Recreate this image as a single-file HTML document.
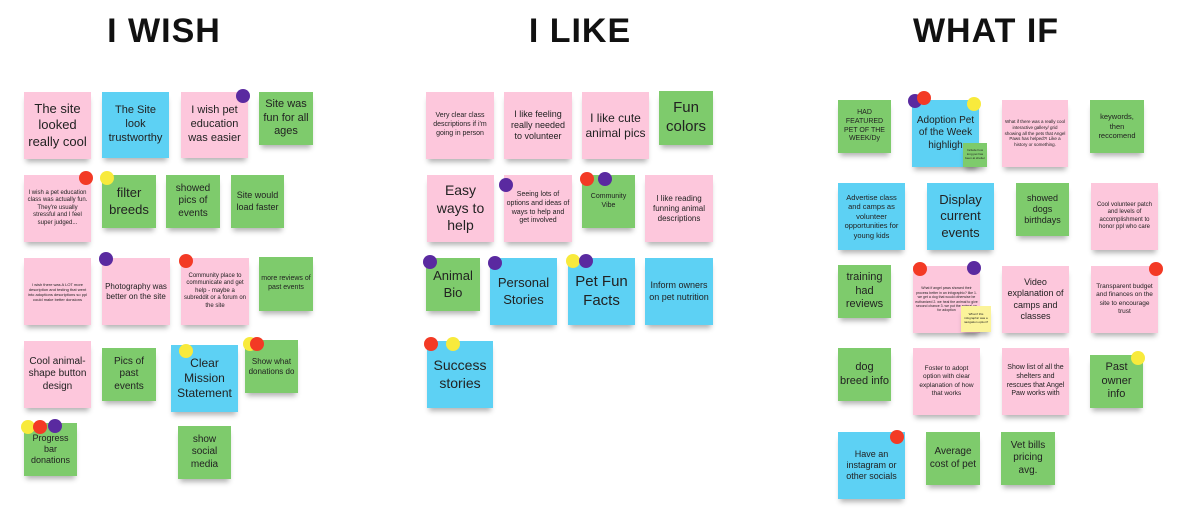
<!DOCTYPE html>
<html><head><meta charset="utf-8"><style>
body{margin:0;width:1180px;height:520px;background:#fff;position:relative;overflow:hidden;font-family:"Liberation Sans",sans-serif}
h1{position:absolute;top:12px;margin:0;font-size:34px;font-weight:bold;color:#111;letter-spacing:1px;transform:translateX(-50%);white-space:nowrap}
.n{position:absolute;display:flex;align-items:center;justify-content:center;text-align:center;color:#222;line-height:1.25;box-shadow:0 5px 5px -2px rgba(0,0,0,.3);box-sizing:border-box;padding:2px;overflow:hidden}
.p{background:#fdc7dc}.b{background:#5dd1f4}.g{background:#7ecb6c}.y{background:#fbf39a}
.d{position:absolute;width:14px;height:14px;border-radius:50%;margin:-7px 0 0 -7px}
.r{background:#f33a25}.u{background:#5a2aa0}.w{background:#f8ea3c}
</style></head><body>
<h1 style="left:164px">I WISH</h1>
<h1 style="left:580px">I LIKE</h1>
<h1 style="left:986px">WHAT IF</h1>

<div class="n p" style="left:24px;top:92px;width:67px;height:67px;font-size:13px">The site looked really cool</div>
<div class="n b" style="left:102px;top:92px;width:67px;height:66px;font-size:11px">The Site look trustworthy</div>
<div class="n p" style="left:181px;top:92px;width:67px;height:66px;font-size:11px">I wish pet education was easier</div>
<div class="n g" style="left:259px;top:92px;width:54px;height:53px;font-size:11px">Site was fun for all ages</div>
<div class="n p" style="left:24px;top:175px;width:67px;height:67px;font-size:6px">I wish a pet education class was actually fun. They're usually stressful and I feel super judged...</div>
<div class="n g" style="left:102px;top:175px;width:54px;height:53px;font-size:13px">filter breeds</div>
<div class="n g" style="left:166px;top:175px;width:54px;height:53px;font-size:10px">showed pics of events</div>
<div class="n g" style="left:231px;top:175px;width:53px;height:53px;font-size:9px">Site would load faster</div>
<div class="n p" style="left:24px;top:258px;width:67px;height:67px;font-size:4px">I wish there was A LOT more description and testing that went into adoptions descriptions so ppl could make better donsions</div>
<div class="n p" style="left:102px;top:258px;width:68px;height:67px;font-size:8px">Photography was better on the site</div>
<div class="n p" style="left:181px;top:258px;width:68px;height:67px;font-size:6px">Community place to communicate and get help - maybe a subreddit or a forum on the site</div>
<div class="n g" style="left:259px;top:257px;width:54px;height:54px;font-size:7px">more reviews of past events</div>
<div class="n p" style="left:24px;top:341px;width:67px;height:67px;font-size:10px">Cool animal-shape button design</div>
<div class="n g" style="left:102px;top:348px;width:54px;height:53px;font-size:10px">Pics of past events</div>
<div class="n b" style="left:171px;top:345px;width:67px;height:67px;font-size:12px">Clear Mission Statement</div>
<div class="n g" style="left:245px;top:340px;width:53px;height:53px;font-size:8px">Show what donations do</div>
<div class="n g" style="left:24px;top:423px;width:53px;height:53px;font-size:9px">Progress bar donations</div>
<div class="n g" style="left:178px;top:426px;width:53px;height:53px;font-size:10px">show social media</div>

<div class="n p" style="left:426px;top:92px;width:68px;height:67px;font-size:7px">Very clear class descriptions if i'm going in person</div>
<div class="n p" style="left:504px;top:92px;width:68px;height:67px;font-size:9px">I like feeling really needed to volunteer</div>
<div class="n p" style="left:582px;top:92px;width:67px;height:67px;font-size:12px">I like cute animal pics</div>
<div class="n g" style="left:659px;top:91px;width:54px;height:54px;font-size:15px">Fun colors</div>
<div class="n p" style="left:427px;top:175px;width:67px;height:67px;font-size:14px">Easy ways to help</div>
<div class="n p" style="left:504px;top:175px;width:68px;height:67px;font-size:7px">Seeing lots of options and ideas of ways to help and get involved</div>
<div class="n g" style="left:582px;top:175px;width:53px;height:53px;font-size:7px">Community Vibe</div>
<div class="n p" style="left:645px;top:175px;width:68px;height:67px;font-size:8px">I like reading funning animal descriptions</div>
<div class="n g" style="left:426px;top:258px;width:54px;height:53px;font-size:13px">Animal Bio</div>
<div class="n b" style="left:490px;top:258px;width:67px;height:67px;font-size:13px">Personal Stories</div>
<div class="n b" style="left:568px;top:258px;width:67px;height:67px;font-size:15px">Pet Fun Facts</div>
<div class="n b" style="left:645px;top:258px;width:68px;height:67px;font-size:9px">Inform owners on pet nutrition</div>
<div class="n b" style="left:427px;top:341px;width:66px;height:67px;font-size:14px">Success stories</div>

<div class="n g" style="left:838px;top:100px;width:53px;height:53px;font-size:7px">HAD FEATURED PET OF THE WEEK/Dy</div>
<div class="n b" style="left:912px;top:100px;width:67px;height:67px;font-size:10px;justify-content:flex-start">Adoption Pet of the Week highligh</div>
<div class="n g" style="left:963px;top:143px;width:24px;height:24px;font-size:3px">Include how long pet has been at shelter</div>
<div class="n p" style="left:1002px;top:100px;width:66px;height:67px;font-size:4.5px">What if there was a really cool interactive gallery/ grid showing all the pets that Angel Paws has helped?! Like a history or something.</div>
<div class="n g" style="left:1090px;top:100px;width:54px;height:53px;font-size:7.5px">keywords, then reccomend</div>
<div class="n b" style="left:838px;top:183px;width:67px;height:67px;font-size:7.5px">Advertise class and camps as volunteer opportunities for young kids</div>
<div class="n b" style="left:927px;top:183px;width:67px;height:67px;font-size:13px">Display current events</div>
<div class="n g" style="left:1016px;top:183px;width:53px;height:53px;font-size:9px">showed dogs birthdays</div>
<div class="n p" style="left:1091px;top:183px;width:67px;height:67px;font-size:6px">Cool volunteer patch and levels of accomplishment to honor ppl who care</div>
<div class="n g" style="left:838px;top:265px;width:53px;height:53px;font-size:11px">training had reviews</div>
<div class="n p" style="left:913px;top:266px;width:67px;height:67px;font-size:3.5px">What if angel paws showed their process better in an infographic? like 1. we get a dog that would otherwise be euthanized 2. we heal the animal to give second chance 3. we put the animal up for adoption</div>
<div class="n y" style="left:961px;top:306px;width:30px;height:26px;font-size:3px">What if this infographic was a navigation option?</div>
<div class="n p" style="left:1002px;top:266px;width:67px;height:67px;font-size:9px">Video explanation of camps and classes</div>
<div class="n p" style="left:1091px;top:266px;width:67px;height:67px;font-size:6.5px">Transparent budget and finances on the site to encourage trust</div>
<div class="n g" style="left:838px;top:348px;width:53px;height:53px;font-size:11px">dog breed info</div>
<div class="n p" style="left:913px;top:348px;width:67px;height:67px;font-size:6.5px">Foster to adopt option with clear explanation of how that works</div>
<div class="n p" style="left:1002px;top:348px;width:67px;height:67px;font-size:7px">Show list of all the shelters and rescues that Angel Paw works with</div>
<div class="n g" style="left:1090px;top:355px;width:53px;height:53px;font-size:11px">Past owner info</div>
<div class="n b" style="left:838px;top:432px;width:67px;height:67px;font-size:9px">Have an instagram or other socials</div>
<div class="n g" style="left:926px;top:432px;width:54px;height:53px;font-size:10px">Average cost of pet</div>
<div class="n g" style="left:1001px;top:432px;width:54px;height:53px;font-size:10px">Vet bills pricing avg.</div>

<div class="d u" style="left:243px;top:96px"></div>
<div class="d r" style="left:86px;top:178px"></div>
<div class="d w" style="left:107px;top:178px"></div>
<div class="d u" style="left:106px;top:259px"></div>
<div class="d r" style="left:186px;top:261px"></div>
<div class="d w" style="left:186px;top:351px"></div>
<div class="d w" style="left:250px;top:344px"></div>
<div class="d r" style="left:257px;top:344px"></div>
<div class="d w" style="left:28px;top:427px"></div>
<div class="d r" style="left:40px;top:427px"></div>
<div class="d u" style="left:55px;top:426px"></div>
<div class="d u" style="left:506px;top:185px"></div>
<div class="d r" style="left:587px;top:179px"></div>
<div class="d u" style="left:605px;top:179px"></div>
<div class="d u" style="left:430px;top:262px"></div>
<div class="d u" style="left:495px;top:263px"></div>
<div class="d w" style="left:573px;top:261px"></div>
<div class="d u" style="left:586px;top:261px"></div>
<div class="d r" style="left:431px;top:344px"></div>
<div class="d w" style="left:453px;top:344px"></div>
<div class="d u" style="left:915px;top:101px"></div>
<div class="d r" style="left:924px;top:98px"></div>
<div class="d w" style="left:974px;top:104px"></div>
<div class="d r" style="left:920px;top:269px"></div>
<div class="d u" style="left:974px;top:268px"></div>
<div class="d r" style="left:1156px;top:269px"></div>
<div class="d w" style="left:1138px;top:358px"></div>
<div class="d r" style="left:897px;top:437px"></div>
</body></html>
